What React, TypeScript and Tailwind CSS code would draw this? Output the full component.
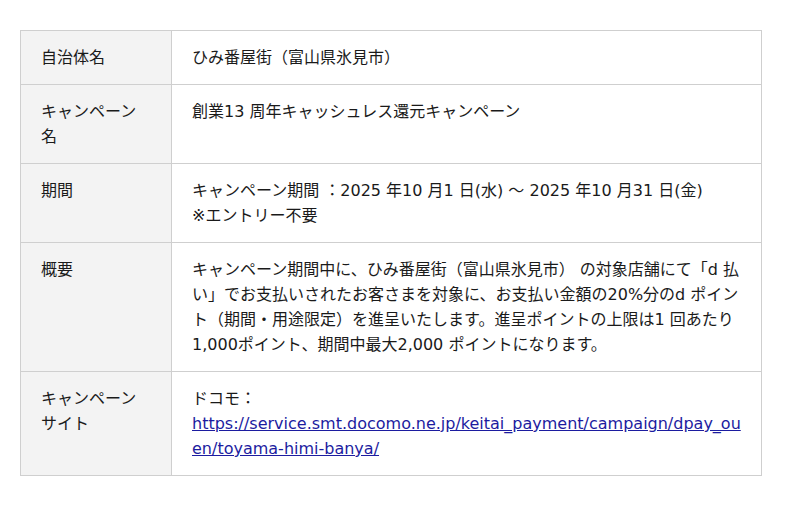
import React from 'react';

const rows: { label: string; body: React.ReactNode }[] = [
  { label: '自治体名', body: 'ひみ番屋街（富山県氷見市）' },
  { label: 'キャンペーン名', body: '創業13 周年キャッシュレス還元キャンペーン' },
  {
    label: '期間',
    body: (
      <>
        キャンペーン期間 ：2025 年10 月1 日(水) ～ 2025 年10 月31 日(金)
        <br />
        ※エントリー不要
      </>
    ),
  },
  {
    label: '概要',
    body: 'キャンペーン期間中に、ひみ番屋街（富山県氷見市） の対象店舗にて「d 払い」でお支払いされたお客さまを対象に、お支払い金額の20%分のd ポイント（期間・用途限定）を進呈いたします。進呈ポイントの上限は1 回あたり1,000ポイント、期間中最大2,000 ポイントになります。',
  },
  {
    label: 'キャンペーンサイト',
    body: (
      <>
        ドコモ：
        <br />
        <a href="#" className="text-[#1c1ca0] underline break-all">
          https://service.smt.docomo.ne.jp/keitai_payment/campaign/dpay_ouen/toyama-himi-banya/
        </a>
      </>
    ),
  },
];

export default function App() {
  return (
    <div className="w-[800px] h-[506px] bg-white pt-[30px] px-5 font-['DejaVu_Sans','Noto_Sans_CJK_JP',sans-serif] text-[16px] leading-[25px] text-[#1a1a1a]">
      <table className="w-[742px] border-collapse table-fixed">
        <colgroup>
          <col className="w-[151px]" />
          <col />
        </colgroup>
        <tbody>
          {rows.map(r => (
            <tr key={r.label}>
              <th className="border border-[#cfcfcf] bg-[#f3f3f3] px-5 py-[14px] text-left align-top font-normal">
                {r.label}
              </th>
              <td className="border border-[#cfcfcf] px-5 py-[14px] align-top">{r.body}</td>
            </tr>
          ))}
        </tbody>
      </table>
    </div>
  );
}
